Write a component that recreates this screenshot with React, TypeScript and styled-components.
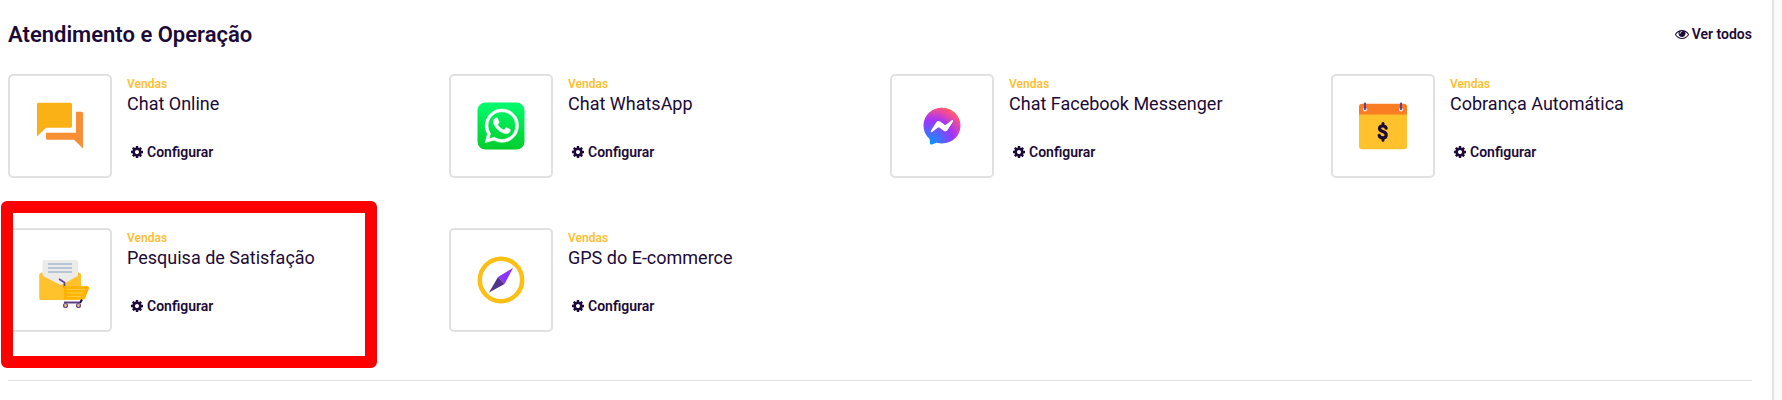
import React from 'react';
import styled, { createGlobalStyle } from 'styled-components';

const ink = '#1c0a38';
const line = '#e1e1e1';

const GlobalStyle = createGlobalStyle`
  *, *::before, *::after { box-sizing: border-box; }
  body {
    margin: 0;
    background: #fafafa;
    color: ${ink};
    font-family: Roboto, 'Liberation Sans', sans-serif;
  }
`;

const Page = styled.main`
  min-height: 100vh;
  margin-right: 8px;
  padding: 20px 20px 19px 8px;
  background: #fff;
  border-right: 2px solid ${line};
`;

const Section = styled.section`
  padding-bottom: 48px;
  border-bottom: 1px solid ${line};
`;

const SectionHeader = styled.header`
  display: flex;
  align-items: flex-start;
  justify-content: space-between;
  margin-bottom: 24px;
`;

const SectionTitle = styled.h2`
  margin: 0;
  font-size: 22px;
  font-weight: 600;
  line-height: 30px;
`;

const ActionLink = styled.a`
  display: inline-flex;
  align-items: center;
  gap: 3px;
  color: ${ink};
  font-size: 14px;
  font-weight: 600;
  line-height: 28px;
  text-decoration: none;
`;

const Grid = styled.ul`
  display: grid;
  grid-template-columns: repeat(4, minmax(0, 1fr));
  gap: 50px 20px;
  margin: 0;
  padding: 0;
  list-style: none;
`;

const Card = styled.li<{ $highlighted?: boolean }>`
  position: relative;
  display: flex;
  gap: 15px;

  ${({ $highlighted }) =>
    $highlighted &&
    `&::after {
      content: '';
      position: absolute;
      top: -27px;
      bottom: -36px;
      left: -7px;
      width: 376px;
      border: 12px solid #f00;
      border-radius: 6px;
      pointer-events: none;
    }`}
`;

const IconTile = styled.div`
  display: flex;
  flex: none;
  align-items: center;
  justify-content: center;
  width: 104px;
  height: 104px;
  border: 2px solid ${line};
  border-radius: 5px;
`;

const CardBody = styled.div`
  display: flex;
  flex-direction: column;
  align-items: flex-start;
`;

const Category = styled.span`
  margin-top: 2px;
  color: #ffbe32;
  font-size: 12px;
  font-weight: 600;
  line-height: 16px;
`;

const CardTitle = styled.h3`
  margin: 0;
  font-size: 18px;
  font-weight: 400;
  line-height: 24px;
`;

const ConfigureLink = styled(ActionLink)`
  margin: 22px 0 0 3px;
`;

const Glyph = styled.svg`
  flex: none;
  width: 14px;
  height: 14px;
  fill: currentColor;
`;

const CogGlyph = () => (
  <Glyph viewBox="0 0 1792 1792" aria-hidden="true">
    <path d="M1152 896q0-106-75-181t-181-75-181 75-75 181 75 181 181 75 181-75 75-181zm512-109v222q0 12-8 23t-20 13l-185 28q-19 54-39 91 35 50 107 138 10 12 10 25t-9 23q-27 37-99 108t-94 71q-12 0-26-9l-138-108q-44 23-91 38-16 136-29 186-7 28-36 28h-222q-14 0-24.5-8.5t-11.5-21.5l-28-184q-49-16-90-37l-141 107q-10 9-25 9-14 0-25-11-126-114-165-168-7-10-7-23 0-12 8-23 15-21 51-66.5t54-70.5q-27-50-41-99l-183-27q-13-2-21-12.5t-8-23.5v-222q0-12 8-23t19-13l186-28q14-46 39-92-40-57-107-138-10-12-10-24 0-10 9-23 26-36 98.5-107.5t94.5-71.5q13 0 26 10l138 107q44-23 91-38 16-136 29-186 7-28 36-28h222q14 0 24.5 8.5t11.5 21.5l28 184q49 16 90 37l142-107q9-9 24-9 13 0 25 10 129 119 165 170 7 8 7 22 0 12-8 23-15 21-51 66.5t-54 70.5q26 50 41 98l183 28q13 2 21 12.5t8 23.5z" />
  </Glyph>
);

const EyeGlyph = () => (
  <Glyph viewBox="0 0 1792 1792" aria-hidden="true">
    <path d="M1664 960q-152-236-381-353 61 104 61 225 0 185-131.5 316.5t-316.5 131.5-316.5-131.5-131.5-316.5q0-121 61-225-229 117-381 353 133 205 333.5 326.5t434.5 121.5 434.5-121.5 333.5-326.5zm-720-384q0-20-14-34t-34-14q-125 0-214.5 89.5t-89.5 214.5q0 20 14 34t34 14 34-14 14-34q0-86 61-147t147-61q20 0 34-14t14-34zm848 384q0 34-20 69-140 230-376.5 368.5t-499.5 138.5-499.5-139-376.5-368q-20-35-20-69t20-69q140-229 376.5-368t499.5-139 499.5 139 376.5 368q20 35 20 69z" />
  </Glyph>
);

const Art = styled.svg`
  width: 50px;
  height: 50px;
  overflow: visible;
`;

const ChatArt = () => (
  <Art viewBox="0 0 50 50" aria-hidden="true">
    <path d="M3.500 1.700h32a1.500 1.500 0 0 1 1.500 1.500v22a1.500 1.500 0 0 1-1.500 1.500H11L2 35.600V3.200a1.500 1.500 0 0 1 1.500-1.500z" fill="#f9b115" />
    <path d="M41 10.800h5.500A1.500 1.500 0 0 1 48 12.300V47.500L39 38.700H12.500A1.500 1.500 0 0 1 11 37.200V31.700H41z" fill="#f98f35" />
  </Art>
);

const WhatsAppArt = () => (
  <Art viewBox="0 0 50 50" aria-hidden="true">
    <defs>
      <linearGradient id="whatsapp-green" x1="0" y1="0" x2="0" y2="1">
        <stop offset="0" stopColor="#00fb6f" />
        <stop offset="1" stopColor="#03cc2c" />
      </linearGradient>
    </defs>
    <rect x="1.500" y="1.500" width="47" height="47" rx="8" fill="url(#whatsapp-green)" />
    <g transform="translate(9 8) scale(1.400)" fill="#fff" stroke="#fff" strokeWidth="0.400">
      <path d="M17.472 14.382c-.297-.149-1.758-.867-2.030-.967-.273-.099-.471-.148-.67.150-.197.297-.767.966-.940 1.164-.173.199-.347.223-.644.075-.297-.150-1.255-.463-2.390-1.475-.883-.788-1.480-1.761-1.653-2.059-.173-.297-.018-.458.130-.606.134-.133.298-.347.446-.520.149-.174.198-.298.298-.497.099-.198.050-.371-.025-.520-.075-.149-.669-1.612-.916-2.207-.242-.579-.487-.5-.669-.510-.173-.008-.371-.010-.570-.010-.198 0-.520.074-.792.372-.272.297-1.040 1.016-1.040 2.479 0 1.462 1.065 2.875 1.213 3.074.149.198 2.096 3.200 5.077 4.487.709.306 1.262.489 1.694.625.712.227 1.360.195 1.871.118.571-.085 1.758-.719 2.006-1.413.248-.694.248-1.289.173-1.413-.074-.124-.272-.198-.570-.347m-5.421 7.403h-.004a9.870 9.870 0 01-5.031-1.378l-.361-.214-3.741.982.998-3.648-.235-.374a9.860 9.860 0 01-1.510-5.260c.001-5.450 4.436-9.884 9.888-9.884 2.640 0 5.122 1.030 6.988 2.898a9.825 9.825 0 012.893 6.994c-.003 5.450-4.437 9.884-9.885 9.884m8.413-18.297A11.815 11.815 0 0012.050 0C5.495 0 .160 5.335.157 11.892c0 2.096.547 4.142 1.588 5.945L.057 24l6.305-1.654a11.882 11.882 0 005.683 1.448h.005c6.554 0 11.890-5.335 11.893-11.893a11.821 11.821 0 00-3.480-8.413z" />
    </g>
  </Art>
);

const MessengerArt = () => (
  <Art viewBox="0 0 50 50" aria-hidden="true">
    <defs>
      <radialGradient id="messenger-blend" cx="0.19" cy="0.99" r="1.09">
        <stop offset="0" stopColor="#0099ff" />
        <stop offset="0.600" stopColor="#a033ff" />
        <stop offset="0.930" stopColor="#ff5280" />
        <stop offset="1" stopColor="#ff7061" />
      </radialGradient>
    </defs>
    <path d="M25 6.700C14.600 6.700 6.500 14.300 6.500 24.600c0 5.400 2.200 10 5.800 13.200.300.300.500.700.500 1.100l.100 3.300c0 1 1.100 1.700 2.100 1.300l3.700-1.600c.300-.100.700-.200 1-.100 1.700.500 3.500.700 5.300.700 10.400 0 18.500-7.600 18.500-17.900S35.400 6.700 25 6.700z" fill="url(#messenger-blend)" />
    <path d="M13.900 29.800l5.400-8.600c.900-1.400 2.700-1.700 4-.700l4.300 3.200c.400.300.900.300 1.300 0l5.800-4.400c.800-.600 1.800.300 1.300 1.200l-5.400 8.600c-.900 1.400-2.700 1.700-4 .700l-4.300-3.200c-.400-.300-.900-.300-1.300 0l-5.800 4.400c-.800.600-1.800-.300-1.300-1.200z" fill="#fff" />
  </Art>
);

const CalendarArt = () => (
  <Art viewBox="0 0 50 50" aria-hidden="true">
    <path d="M1 13h48v32.300a3 3 0 0 1-3 3H4a3 3 0 0 1-3-3z" fill="#ffc22d" />
    <path d="M4 2.800h42a3 3 0 0 1 3 3V13.500H1V5.800a3 3 0 0 1 3-3z" fill="#fa7d23" />
    <g fill="none" strokeLinecap="round">
      <circle cx="7" cy="8.500" r="1.600" fill="#f4eaf4" stroke="#f4eaf4" />
      <circle cx="43" cy="8.500" r="1.600" fill="#f4eaf4" stroke="#f4eaf4" />
      <path d="M7 2.500v5.500M43 2.500v5.500" stroke="#60439b" strokeWidth="2.200" />
      <path d="M28.200 27.200c-.500-1.500-1.700-2.200-3.400-2.200-2 0-3.300 1-3.300 2.600 0 3.900 6.700 2 6.700 6.300 0 1.900-1.400 2.900-3.500 2.900-1.900 0-3.100-.800-3.500-2.500" stroke={ink} strokeWidth="3.200" />
      <path d="M25 22.500v2M25 37.500v1.700" stroke={ink} strokeWidth="3" />
    </g>
  </Art>
);

const SurveyArt = () => (
  <Art viewBox="0 0 50 50" aria-hidden="true">
    <path d="M4.500 19L26 7l20 12v23.500a1.500 1.500 0 0 1-1.500 1.500H6a1.500 1.500 0 0 1-1.500-1.500z" fill="#ffb820" />
    <path d="M9 5h32a2 2 0 0 1 2 2v16L26 30 7.500 22V7A2 2 0 0 1 9 5z" fill="#ebece7" />
    <path d="M13 9h24M13 13h24M13 17h24" stroke="#b8c5d9" strokeWidth="2" />
    <path d="M4.500 19L26 30.500l20-11.500v25a1 1 0 0 1-1 1H5.500a1 1 0 0 1-1-1z" fill="#ffc22d" />
    <path d="M24 24l5.500 3.500v5" fill="none" stroke="#60439b" strokeWidth="1.700" />
    <path d="M29 31h23a2 2 0 0 1 2 2.500l-3.500 9a3 3 0 0 1-3 2H29z" fill="#ffb400" />
    <path d="M32 34.500h18M32 38h17M32 41.500h14" stroke="#ffc940" strokeWidth="1.200" />
    <path d="M47 44.500l-2 3.500" stroke={ink} strokeWidth="2" />
    <path d="M29 47.500h16" stroke="#58417d" strokeWidth="2" />
    <circle cx="30.500" cy="50.500" r="2" fill="#f8b875" stroke="#68509a" strokeWidth="1.200" />
    <circle cx="43.500" cy="50.500" r="2" fill="#f8b875" stroke="#68509a" strokeWidth="1.200" />
  </Art>
);

const CompassArt = () => (
  <Art viewBox="0 0 50 50" aria-hidden="true">
    <circle cx="25" cy="25" r="21.200" fill="none" stroke="#fbbf16" strokeWidth="4.500" />
    <path d="M37 13L28.500 29 22 22z" fill="#8a35ff" />
    <path d="M13 37.500L22 22l6.500 7z" fill="#54318f" />
  </Art>
);

type App = { name: string; art: () => React.JSX.Element; highlighted?: boolean };

const apps: App[] = [
  { name: 'Chat Online', art: ChatArt },
  { name: 'Chat WhatsApp', art: WhatsAppArt },
  { name: 'Chat Facebook Messenger', art: MessengerArt },
  { name: 'Cobrança Automática', art: CalendarArt },
  { name: 'Pesquisa de Satisfação', art: SurveyArt, highlighted: true },
  { name: 'GPS do E-commerce', art: CompassArt },
];

export default function AppCatalogue() {
  return (
    <>
      <GlobalStyle />
      <Page>
        <Section>
          <SectionHeader>
            <SectionTitle>Atendimento e Operação</SectionTitle>
            <ActionLink href="#todos">
              <EyeGlyph />
              Ver todos
            </ActionLink>
          </SectionHeader>
          <Grid>
            {apps.map(({ name, art: Picture, highlighted }) => (
              <Card key={name} $highlighted={highlighted}>
                <IconTile>
                  <Picture />
                </IconTile>
                <CardBody>
                  <Category>Vendas</Category>
                  <CardTitle>{name}</CardTitle>
                  <ConfigureLink href="#configurar">
                    <CogGlyph />
                    Configurar
                  </ConfigureLink>
                </CardBody>
              </Card>
            ))}
          </Grid>
        </Section>
      </Page>
    </>
  );
}
